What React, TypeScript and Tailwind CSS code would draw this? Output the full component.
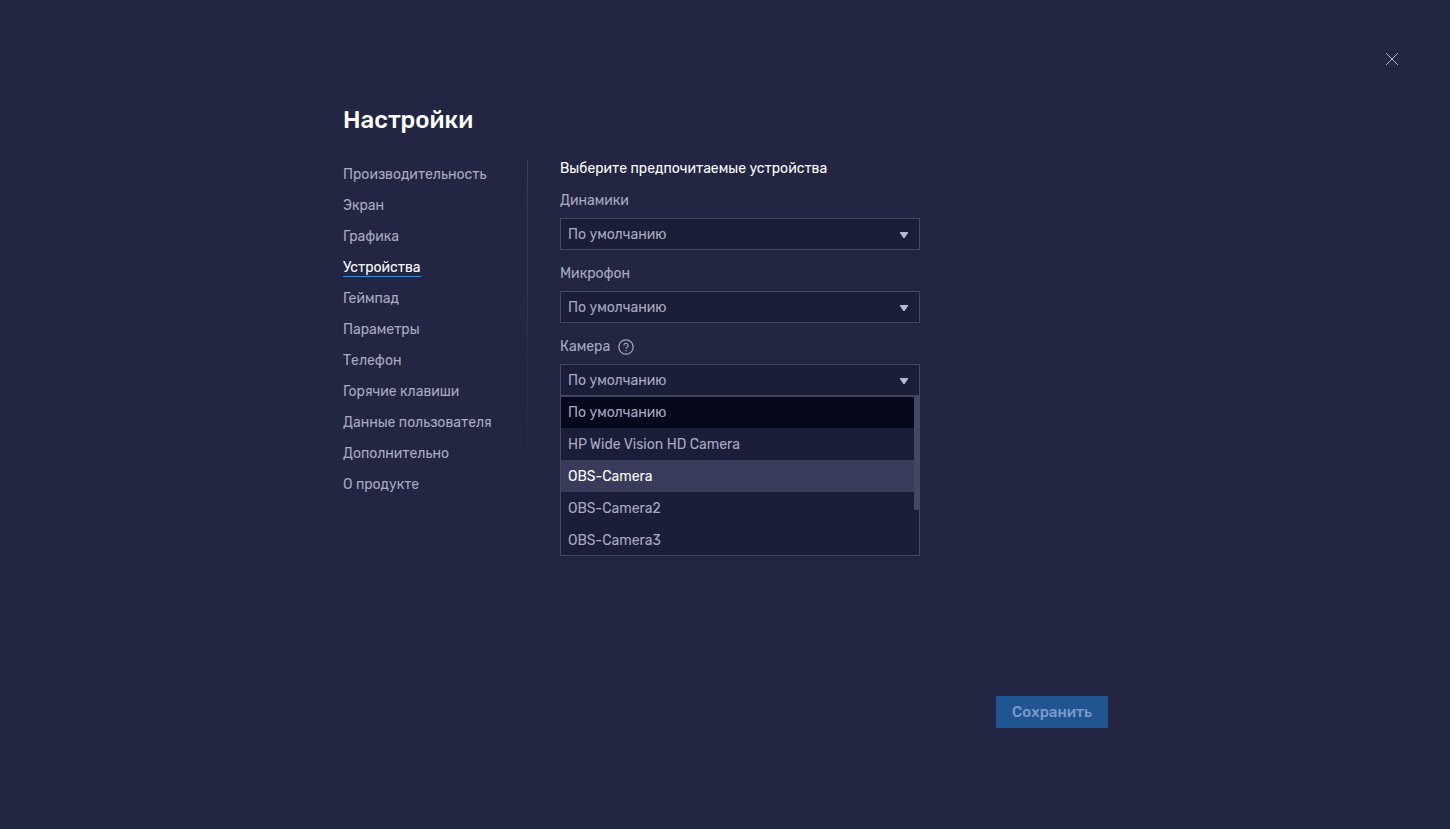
import { useState } from 'react';
import clsx from 'clsx';

const sections = [
  'Производительность',
  'Экран',
  'Графика',
  'Устройства',
  'Геймпад',
  'Параметры',
  'Телефон',
  'Горячие клавиши',
  'Данные пользователя',
  'Дополнительно',
  'О продукте',
];

const DEFAULT = 'По умолчанию';
const cameras = [DEFAULT, 'HP Wide Vision HD Camera', 'OBS-Camera', 'OBS-Camera2', 'OBS-Camera3'];

type DeviceSelectProps = {
  id: string;
  label: string;
  options: string[];
  help?: boolean;
  defaultOpen?: boolean;
  initialHover?: string;
};

function HelpIcon() {
  return (
    <svg width="16" height="16" viewBox="0 0 16 16" fill="none" stroke="currentColor" aria-hidden="true">
      <circle cx="8" cy="8" r="7.2" strokeWidth="1.2" />
      <path d="M5.9 6.4a2.1 2.1 0 1 1 3.3 1.7C8.4 8.7 8 9 8 9.9" strokeWidth="1.1" />
      <path d="M8 10.9v1.3" strokeWidth="1.2" />
    </svg>
  );
}

function DeviceSelect({ id, label, options, help, defaultOpen = false, initialHover }: DeviceSelectProps) {
  const [open, setOpen] = useState(defaultOpen);
  const [value, setValue] = useState(options[0]);
  const [hovered, setHovered] = useState(initialHover);

  return (
    <div className="mb-4">
      <div className="mb-[9px] flex h-4 items-center gap-2">
        <label htmlFor={id}>{label}</label>
        {help && (
          <button type="button" aria-label="Справка">
            <HelpIcon />
          </button>
        )}
      </div>

      <div className="relative">
        <select
          id={id}
          value={value}
          onChange={(e) => setValue(e.target.value)}
          onMouseDown={(e) => {
            e.preventDefault();
            setOpen(!open);
          }}
          className="block h-8 w-full appearance-none border border-[#454664] bg-[#1b1e38] px-[7px] pt-[2px] outline-none"
        >
          {options.map((option) => (
            <option key={option}>{option}</option>
          ))}
        </select>
        <svg
          className="pointer-events-none absolute top-[14px] right-3 text-[#b8b9d3]"
          width="8"
          height="6"
          viewBox="0 0 8 6"
          fill="currentColor"
          aria-hidden="true"
        >
          <path d="M0 0h8v1L4.6 6H3.4L0 1z" />
        </svg>

        {open && (
          <div className="absolute inset-x-0 top-full z-10 bg-[#1b1e38] outline-1 -outline-offset-1 outline-[#454664]">
            <ul role="listbox" aria-label={label} className="pr-[6px]">
              {options.map((option) => (
                <li
                  key={option}
                  role="option"
                  aria-selected={option === value}
                  onMouseEnter={() => setHovered(option)}
                  onClick={() => {
                    setValue(option);
                    setOpen(false);
                  }}
                  className={clsx(
                    'flex h-8 items-center px-2 pt-[2px]',
                    option === value && 'bg-[#06081c]',
                    option !== value && option === hovered && 'bg-[#393b5a] text-white',
                  )}
                >
                  {option}
                </li>
              ))}
            </ul>
            {/* Scrollbar thumb */}
            <div className="absolute top-0 right-0 h-[114px] w-[6px] bg-[#454664]" />
          </div>
        )}
      </div>
    </div>
  );
}

export default function App() {
  const [active, setActive] = useState('Устройства');

  return (
    <div className="min-h-screen bg-[#232642] font-[Rubik,Roboto,'Noto_Sans',sans-serif] text-sm leading-4 text-[#a9aac3]">
      <header className="flex justify-end px-[46px] pt-[47px]">
        <button type="button" aria-label="Закрыть" className="flex size-6 items-center justify-center text-[#b0b1cc]">
          <svg width="14" height="14" viewBox="0 0 14 14" fill="none" stroke="currentColor" aria-hidden="true">
            <path d="M1 1l12 12M13 1L1 13" />
          </svg>
        </button>
      </header>

      <main className="mx-auto max-w-[766px] pt-[33px] pl-px">
        <h1 className="text-2xl leading-8 font-medium text-white">Настройки</h1>

        <div className="mt-6 flex items-start">
          <nav className="w-[184px] shrink-0">
            <ul>
              {sections.map((section) => (
                <li key={section} className="flex h-[31px] items-start pt-[7px]">
                  <a
                    href="#"
                    onClick={(e) => {
                      e.preventDefault();
                      setActive(section);
                    }}
                    className={clsx(
                      'border-b whitespace-nowrap',
                      section === active ? 'border-[#3d8ee0] text-white' : 'border-transparent',
                    )}
                  >
                    {section}
                  </a>
                </li>
              ))}
            </ul>
          </nav>

          <div className="w-px self-stretch">
            <div className="h-[336px] bg-linear-to-b from-[#3b3d5b] to-[#232642]" />
          </div>

          <section className="ml-8 h-[536px] w-full max-w-[360px]">
            <h2 className="mb-4 leading-[17px] text-white">Выберите предпочитаемые устройства</h2>
            <DeviceSelect id="speakers" label="Динамики" options={[DEFAULT]} />
            <DeviceSelect id="microphone" label="Микрофон" options={[DEFAULT]} />
            <DeviceSelect
              id="camera"
              label="Камера"
              options={cameras}
              help
              defaultOpen
              initialHover="OBS-Camera"
            />
          </section>
        </div>

        <div className="flex justify-end">
          <button type="button" disabled className="h-8 bg-[#205591] px-4 text-[15px] font-medium text-[#799bc9]">
            Сохранить
          </button>
        </div>
      </main>
    </div>
  );
}
